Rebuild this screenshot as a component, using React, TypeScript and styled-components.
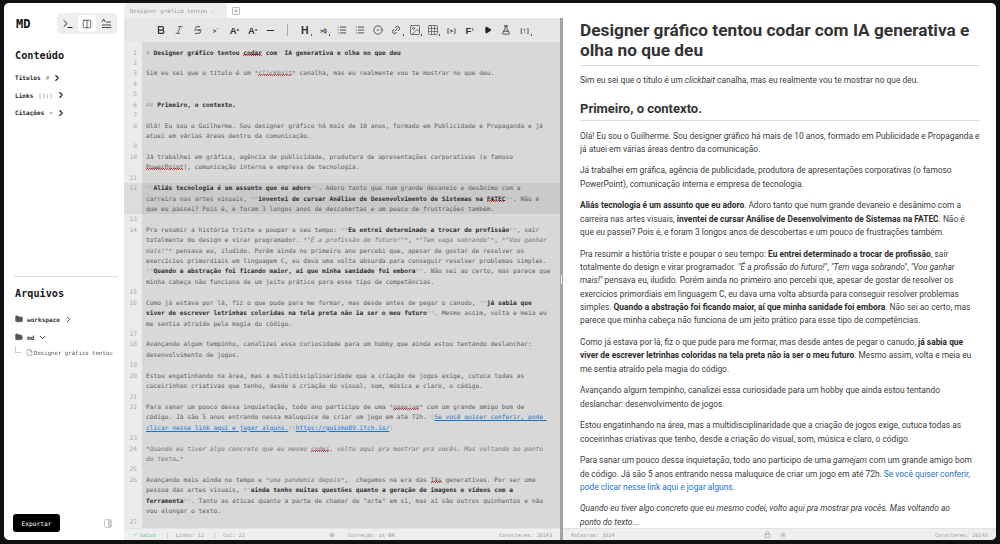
import React from "react";
import styled, { createGlobalStyle } from "styled-components";
import {
  Terminal, Columns2, ChevronRight, ChevronDown, Folder, FolderOpen, File,
  Bold as BoldIcon, Italic, Strikethrough, Minus, List, CircleCheck, Link2, Image, Grid3x3,
  Play, FlaskConical, Sun, Lock, Check, Plus,
} from "lucide-react";

const Global = createGlobalStyle`
  html, body { margin: 0; padding: 0; background: #111; }
  * { box-sizing: border-box; }
`;
const MONO = `"DejaVu Sans Mono", "Liberation Mono", monospace`;

const Page = styled.div`
  width: 1000px; height: 544px; padding: 3px 4px 4px; background: #111; overflow: hidden;
`;
const Win = styled.div`
  display: flex; width: 100%; height: 100%; background: #fff; border-radius: 5px; overflow: hidden;
`;
const Sidebar = styled.aside`
  width: 120px; flex: none; display: flex; flex-direction: column; padding: 10px 6px 8px 11px;
  font-family: ${MONO}; color: #222;
`;
const SideHead = styled.div`display: flex; align-items: center; justify-content: space-between; height: 21px; padding-right: 2px;`;
const Logo = styled.div`font-size: 12px; font-weight: 700; padding-left: 1px; color: #111;`;
const Segs = styled.div`display: flex; width: 60px; height: 21px; background: #eee; border-radius: 4px; padding: 2px; margin-right: -1px; justify-content: space-between;`;
const Seg = styled.div<{ $on?: boolean }>`
  width: 18px; height: 17px; display: flex; align-items: center; justify-content: center; border-radius: 3px;
  background: ${p => (p.$on ? "#fff" : "transparent")}; color: #222;
`;
const SideTitle = styled.div<{ $top: number }>`font-size: 10.2px; font-weight: 700; margin-top: ${p => p.$top}px; color: #1a1a1a;`;
const Outline = styled.div`display: flex; flex-direction: column; gap: 8.6px; margin-top: 12px;`;
const OutlineRow = styled.div`display: flex; align-items: center; gap: 3px; font-size: 6.1px; font-weight: 700; height: 9px; color: #222; white-space: nowrap;`;
const Faint = styled.span`font-weight: 400; color: #888; margin-left: 2px;`;
const Rule = styled.div`height: 1px; background: #ddd; margin: 0 0 0 -1px; margin-top: auto;`;
const Tree = styled.div`display: flex; flex-direction: column; margin-top: 11px; color: #333;`;
const TreeRow = styled.div<{ $h: number }>`display: flex; align-items: center; gap: 4px; height: ${p => p.$h}px; font-size: 6.1px; font-weight: 700; white-space: nowrap; svg { flex: none; }`;
const FileRow = styled.div`
  display: flex; align-items: center; gap: 1px; height: 13px; padding-left: 11px; position: relative;
  font-size: 5.7px; color: #555; white-space: nowrap; overflow: hidden;
  -webkit-mask-image: linear-gradient(to right, #000 92%, transparent 100%);
  svg { flex: none; }
  &::before { content: ""; position: absolute; left: 0; top: -1px; width: 5px; height: 7px; border-left: 1px solid #ccc; border-bottom: 1px solid #ccc; }
`;
const SideFoot = styled.div`display: flex; align-items: center; justify-content: space-between; margin-top: 155px; padding-right: 6px; margin-left: -2px;`;
const Export = styled.button`
  width: 47px; height: 18px; background: #000; color: #fff; border: 0; border-radius: 3px; padding: 0;
  font-family: ${MONO}; font-size: 6.2px;
`;

const Main = styled.div`flex: 1; min-width: 0; display: flex; flex-direction: column;`;
const Tabs = styled.div`height: 15px; flex: none; display: flex; align-items: center;`;
const Tab = styled.div`
  width: 103px; height: 15px; background: #ececec; border-radius: 4px 4px 0 0; padding: 0 6px; display: flex; align-items: center;
  font-family: ${MONO}; font-size: 5.6px; color: #999; white-space: nowrap; overflow: hidden;
`;
const TabText = styled.span`-webkit-mask-image: linear-gradient(to right, #000 85%, transparent 100%); width: 88px; overflow: hidden;`;
const AddTab = styled.div`margin-left: 5px; width: 8px; height: 8px; border: 1px solid #bbb; border-radius: 1px; color: #777; display: flex; align-items: center; justify-content: center;`;
const Split = styled.div`flex: 1; min-height: 0; display: flex;`;
const EditorCol = styled.section`width: 436px; flex: none; display: flex; flex-direction: column;`;
const Toolbar = styled.div`
  height: 24px; flex: none; background: #e6e6e6; display: flex; align-items: center; padding-left: 28px; color: #333;
  font-family: "Liberation Sans", sans-serif;
`;
const Tool = styled.div<{ $more?: boolean; $big?: boolean }>`
  width: 18.3px; height: 14px; flex: none; display: flex; align-items: center; justify-content: center; position: relative;
  font-size: ${p => (p.$big ? 10.5 : 9.5)}px; font-weight: 700; white-space: nowrap;
  ${p => p.$more && `&::after { content: ""; position: absolute; right: 2px; bottom: 1px; width: 1px; height: 2px; background: #555; }`}
`;
const ToolMono = styled(Tool)`font-family: ${MONO}; font-size: 6px; font-weight: 700; letter-spacing: -0.3px;`;
const Sep = styled.div`width: 1px; height: 12px; background: #aaa; margin: 0 7.35px; flex: none;`;
const Sup = styled.sup`font-size: 4px; line-height: 0;`;
const Sub = styled.sub`font-size: 4px; line-height: 0;`;

const Code = styled.div`
  flex: 1; min-height: 0; overflow: hidden; background: #d8d8d8; padding-top: 5.6px; position: relative;
  font-family: ${MONO}; font-size: 6.22px; line-height: 10.42px; color: #5c5c5c;
  background-image: linear-gradient(to right, #ebebeb 18px, transparent 18px);
`;
const Row = styled.div<{ $active?: boolean }>`
  display: flex; min-height: 10.42px;
  background: ${p => (p.$active ? "linear-gradient(to right, #dcdcdc 18px, #cacaca 18px)" : "transparent")};
`;
const Num = styled.div`width: 18px; flex: none; text-align: right; padding-right: 5px; color: #a8a8a8;`;
const Txt = styled.div`padding-left: 4px; white-space: pre;`;
const B = styled.b`font-weight: 700; color: #2e2e2e;`;
const M = styled.span`color: #a9a9a9; font-weight: 400;`;
const I = styled.i`font-style: italic; color: #777;`;
const W = styled.span`
  background-image:
    repeating-linear-gradient(90deg, #e0343c 0 1px, transparent 1px 2px),
    repeating-linear-gradient(90deg, transparent 0 1px, #e0343c 1px 2px);
  background-size: 100% 1px;
  background-repeat: no-repeat;
  background-position: 0 100%, 0 calc(100% - 1px);
`;
const L = styled.span`color: #1a73c8; text-decoration: underline; text-underline-offset: 1px;`;

const StatusBar = styled.div`
  height: 12px; flex: none; background: #eee; border-top: 1px solid #e2e2e2; display: flex; align-items: center;
  font-family: ${MONO}; font-size: 5.2px; color: #999; white-space: nowrap; position: relative;
`;
const EditorStatus = styled(StatusBar)`padding: 0 8px 0 9px;`;
const Saved = styled.span`color: #52c46e; display: flex; align-items: center; gap: 2px; width: 33px;`;
const Bar = styled.span`width: 10px;`;
const StatusText = styled.span<{ $w: number; $left?: number }>`width: ${p => p.$w}px; margin-left: ${p => p.$left ?? 0}px;`;
const Push = styled.span`margin-left: auto;`;

const Divider = styled.div`
  width: 3px; flex: none; background: #a3a3a3; position: relative;
  &::after { content: ""; position: absolute; left: 1px; top: 257px; width: 1px; height: 9px; background: #eee; }
`;
const PreviewCol = styled.section`flex: 1; min-width: 0; display: flex; flex-direction: column;`;
const Preview = styled.article`
  flex: 1; min-height: 0; overflow: hidden; padding: 2px 14px 0 17px;
  font-family: Roboto, "Liberation Sans", sans-serif; font-size: 8.4px; line-height: 13.35px; color: #3c3c3c;
  p { margin: 0 0 8.25px; }
  b { font-weight: 700; color: #2c2c2c; }
`;
const H1 = styled.h1`
  font-size: 17.3px; line-height: 20px; font-weight: 700; color: #333; margin: 0 2px 8px 0; padding-bottom: 5px; border-bottom: 1px solid #ddd;
`;
const H2 = styled.h2`
  font-size: 13px; line-height: 18px; font-weight: 700; color: #333; margin: 12.8px 2px 8.4px 0; padding-bottom: 2px; border-bottom: 1px solid #ddd;
`;
const Link = styled.span`color: #1a73c8;`;
const PreviewStatus = styled(StatusBar)`padding: 0 8px; justify-content: space-between;`;
const Center = styled.div`display: flex; align-items: center; gap: 9px; color: #777;`;

const lines: [number, React.ReactNode, boolean?][] = [
  [1, <><M># </M><B>Designer gráfico tentou <W>codar</W> com  IA generativa e olha no que deu</B></>],
  [2, ""],
  [3, <>Sim eu sei que o título é um <I>*<W>clickbait</W>*</I> canalha, mas eu realmente vou te mostrar no que deu.</>],
  [4, ""],
  [5, ""],
  [6, <><M>## </M><B>Primeiro, o contexto.</B></>],
  [7, ""],
  [8, <>Olá! Eu sou o Guilherme. Sou designer gráfico há mais de 10 anos, formado em Publicidade e Propaganda e já<br />atuei em várias áreas dentro da comunicação.</>],
  [9, ""],
  [10, <>Já trabalhei em gráfica, agência de publicidade, produtora de apresentações corporativas (o famoso<br /><W>PowerPoint</W>), comunicação interna e empresa de tecnologia.</>],
  [11, ""],
  [12, <><M>**</M><B>Aliás tecnologia é um assunto que eu adoro</B><M>**</M>. Adoro tanto que num grande devaneio e desânimo com a<br />carreira nas artes visuais, <M>**</M><B>inventei de cursar Análise de Desenvolvimento de Sistemas na <W>FATEC</W></B><M>**</M>. Não é<br />que eu passei? Pois é, e foram 3 longos anos de descobertas e um pouco de frustrações também.</>, true],
  [13, ""],
  [14, <>Pra resumir a história triste e poupar o seu tempo: <M>**</M><B>Eu entrei determinado a trocar de profissão</B><M>**</M>, sair<br />totalmente do design e virar programador. <I>*"É a profissão do futuro!"*</I>, <I>*"Tem vaga sobrando"*</I>, <I>*"Vou ganhar<br />mais!"*</I> pensava eu, iludido. Porém ainda no primeiro ano percebi que, apesar de gostar de resolver os<br />exercícios primordiais em linguagem C, eu dava uma volta absurda para conseguir resolver problemas simples.<br /><M>**</M><B>Quando a abstração foi ficando maior, aí que minha sanidade foi embora</B><M>**</M>. Não sei ao certo, mas parece que<br />minha cabeça não funciona de um jeito prático para esse tipo de competências.</>],
  [15, ""],
  [16, <>Como já estava por lá, fiz o que pude para me formar, mas desde antes de pegar o canudo, <M>**</M><B>já sabia que<br />viver de escrever letrinhas coloridas na tela preta não ia ser o meu futuro</B><M>**</M>. Mesmo assim, volta e meia eu<br />me sentia atraído pela magia do código.</>],
  [17, ""],
  [18, <>Avançando algum tempinho, canalizei essa curiosidade para um hobby que ainda estou tentando deslanchar:<br />desenvolvimento de jogos.</>],
  [19, ""],
  [20, <>Estou engatinhando na área, mas a multidisciplinaridade que a criação de jogos exige, cutuca todas as<br />coceirinhas criativas que tenho, desde a criação do visual, som, música e claro, o código.</>],
  [21, ""],
  [22, <>Para sanar um pouco dessa inquietação, todo ano participo de uma <I>*<W>gamejam</W>*</I> com um grande amigo bom de<br />código. Já são 5 anos entrando nessa maluquice de criar um jogo em até 72h. <M>[</M><L>Se você quiser conferir, pode <br />clicar nesse link aqui e jogar alguns.</L><M>](</M><L>https://guizmo89.itch.io/</L><M>)</M></>],
  [23, ""],
  [24, <><I>*Quando eu tiver algo concreto que eu mesmo <W>codei</W>, volto aqui pra mostrar pra vocês. Mas voltando ao ponto<br />do texto…*</I></>],
  [25, ""],
  [26, <>Avançando mais ainda no tempo e <I>*uma pandemia depois*</I>,  chegamos na era das <W>IAs</W> generativas. Por ser uma<br />pessoa das artes visuais, <M>**</M><B>ainda tenho muitas questões quanto a geração de imagens e vídeos com a<br />ferramenta</B><M>**</M>. Tanto as éticas quanto a parte de chamar de "arte" em si, mas aí são outros quinhentos e não<br />vou alongar o texto.</>],
  [27, ""],
];

export default function App() {
  return (
    <Page>
      <Global />
      <Win>
        <Sidebar>
          <SideHead>
            <Logo>MD</Logo>
            <Segs>
              <Seg><Terminal size={12} strokeWidth={2} /></Seg>
              <Seg $on><Columns2 size={10} strokeWidth={1.6} /></Seg>
              <Seg>
                <svg width="11" height="11" viewBox="0 0 11 11" fill="none" stroke="#333" strokeWidth="0.9">
                  <path d="M1 9.500h9M1 7h9M5 4h5M1.200 4 2.600 1l1.400 3" />
                </svg>
              </Seg>
            </Segs>
          </SideHead>
          <SideTitle $top={16}>Conteúdo</SideTitle>
          <Outline>
            <OutlineRow>Títulos<Faint>#</Faint><ChevronRight size={10} strokeWidth={2.6} /></OutlineRow>
            <OutlineRow>Links<Faint>[]()</Faint><ChevronRight size={10} strokeWidth={2.6} /></OutlineRow>
            <OutlineRow>Citações<Faint>&gt;</Faint><ChevronRight size={10} strokeWidth={2.6} /></OutlineRow>
          </Outline>
          <Rule />
          <SideTitle $top={11}>Arquivos</SideTitle>
          <Tree>
            <TreeRow $h={18}><Folder size={8} fill="#555" stroke="#555" />workspace<ChevronRight size={9} strokeWidth={2.6} /></TreeRow>
            <TreeRow $h={18}><FolderOpen size={8} fill="#555" stroke="#555" />md<ChevronDown size={9} strokeWidth={2.4} /></TreeRow>
            <FileRow><File size={7} strokeWidth={1.5} />Designer gráfico tentou codar</FileRow>
          </Tree>
          <SideFoot>
            <Export>Exportar</Export>
            <svg width="8" height="9" viewBox="0 0 8 9">
              <rect x="0.5" y="0.5" width="7" height="8" rx="1.5" fill="#fff" stroke="#ccc" />
              <path d="M4 0.5h2a1.5 1.5 0 0 1 1.5 1.5v5A1.5 1.5 0 0 1 6 8.500H4z" fill="#ccc" />
            </svg>
          </SideFoot>
        </Sidebar>
        <Main>
          <Tabs>
            <Tab><TabText>Designer gráfico tentou codar com IA</TabText></Tab>
            <AddTab><Plus size={6} strokeWidth={2} /></AddTab>
          </Tabs>
          <Split>
            <EditorCol>
              <Toolbar>
                <Tool><BoldIcon size={10} strokeWidth={3} /></Tool>
                <Tool><Italic size={10} strokeWidth={1.6} /></Tool>
                <Tool><Strikethrough size={10} strokeWidth={2} /></Tool>
                <ToolMono>&gt;`</ToolMono>
                <Tool>A<Sup>a</Sup></Tool>
                <Tool>A<Sub>a</Sub></Tool>
                <Tool><Minus size={11} strokeWidth={2.5} /></Tool>
                <Sep />
                <Tool $more $big>H</Tool>
                <ToolMono $more>&gt;Q</ToolMono>
                <Tool><List size={10} strokeWidth={2} /></Tool>
                <Tool><List size={10} strokeWidth={2} /></Tool>
                <Tool><CircleCheck size={10} strokeWidth={1.8} /></Tool>
                <Tool $more><Link2 size={10} strokeWidth={2} style={{ transform: "rotate(-45deg)" }} /></Tool>
                <Tool $more><Image size={12} strokeWidth={1.3} /></Tool>
                <Tool $more><Grid3x3 size={12} strokeWidth={1.1} /></Tool>
                <ToolMono>[&gt;]</ToolMono>
                <Tool>F<Sup>1</Sup></Tool>
                <Tool><Play size={8} fill="#222" strokeWidth={2} /></Tool>
                <Tool><FlaskConical size={10} strokeWidth={2} /></Tool>
                <ToolMono $more>[!]</ToolMono>
              </Toolbar>
              <Code>
                {lines.map(([n, content, active]) => (
                  <Row key={n} $active={active}>
                    <Num>{n}</Num>
                    <Txt>{content}</Txt>
                  </Row>
                ))}
              </Code>
              <EditorStatus>
                <Saved><Check size={5} strokeWidth={2.5} />Salvo</Saved>
                <Bar>|</Bar>
                <StatusText $w={37}>Linha: 12</StatusText>
                <Bar>|</Bar>
                <StatusText $w={106}>Col: 22</StatusText>
                <Sun size={6} strokeWidth={1.5} color="#666" />
                <StatusText $w={60} $left={13}>Correção: pt-BR</StatusText>
                <Push>Caracteres: 20143</Push>
              </EditorStatus>
            </EditorCol>
            <Divider />
            <PreviewCol>
              <Preview>
                <H1>Designer gráfico tentou codar com IA generativa e olha no que deu</H1>
                <p>Sim eu sei que o título é um <i>clickbait</i> canalha, mas eu realmente vou te mostrar no que deu.</p>
                <H2>Primeiro, o contexto.</H2>
                <p>Olá! Eu sou o Guilherme. Sou designer gráfico há mais de 10 anos, formado em Publicidade e Propaganda e<br />já atuei em várias áreas dentro da comunicação.</p>
                <p>Já trabalhei em gráfica, agência de publicidade, produtora de apresentações corporativas (o famoso PowerPoint), comunicação interna e empresa de tecnologia.</p>
                <p><b>Aliás tecnologia é um assunto que eu adoro</b>. Adoro tanto que num grande devaneio e desânimo com a carreira nas artes visuais, <b>inventei de cursar Análise de Desenvolvimento de Sistemas na FATEC</b>. Não é<br />que eu passei? Pois é, e foram 3 longos anos de descobertas e um pouco de frustrações também.</p>
                <p>Pra resumir a história triste e poupar o seu tempo: <b>Eu entrei determinado a trocar de profissão</b>, sair totalmente do design e virar programador. <i>"É a profissão do futuro!"</i>, <i>"Tem vaga sobrando"</i>, <i>"Vou ganhar<br />mais!"</i> pensava eu, iludido. Porém ainda no primeiro ano percebi que, apesar de gostar de resolver os exercícios primordiais em linguagem C, eu dava uma volta absurda para conseguir resolver problemas<br />simples. <b>Quando a abstração foi ficando maior, aí que minha sanidade foi embora</b>. Não sei ao certo, mas parece que minha cabeça não funciona de um jeito prático para esse tipo de competências.</p>
                <p>Como já estava por lá, fiz o que pude para me formar, mas desde antes de pegar o canudo, <b>já sabia que<br />viver de escrever letrinhas coloridas na tela preta não ia ser o meu futuro</b>. Mesmo assim, volta e meia eu me sentia atraído pela magia do código.</p>
                <p>Avançando algum tempinho, canalizei essa curiosidade para um hobby que ainda estou tentando<br />deslanchar: desenvolvimento de jogos.</p>
                <p>Estou engatinhando na área, mas a multidisciplinaridade que a criação de jogos exige, cutuca todas as coceirinhas criativas que tenho, desde a criação do visual, som, música e claro, o código.</p>
                <p>Para sanar um pouco dessa inquietação, todo ano participo de uma <i>gamejam</i> com um grande amigo bom de código. Já são 5 anos entrando nessa maluquice de criar um jogo em até 72h. <Link>Se você quiser conferir,<br />pode clicar nesse link aqui e jogar alguns.</Link></p>
                <p><i>Quando eu tiver algo concreto que eu mesmo codei, volto aqui pra mostrar pra vocês. Mas voltando ao<br />ponto do texto...</i></p>
              </Preview>
              <PreviewStatus>
                <span>Palavras: 3324</span>
                <Center><Lock size={7} strokeWidth={1.5} /><Sun size={6} strokeWidth={1.5} /></Center>
                <span>Caracteres: 20143</span>
              </PreviewStatus>
            </PreviewCol>
          </Split>
        </Main>
      </Win>
    </Page>
  );
}
